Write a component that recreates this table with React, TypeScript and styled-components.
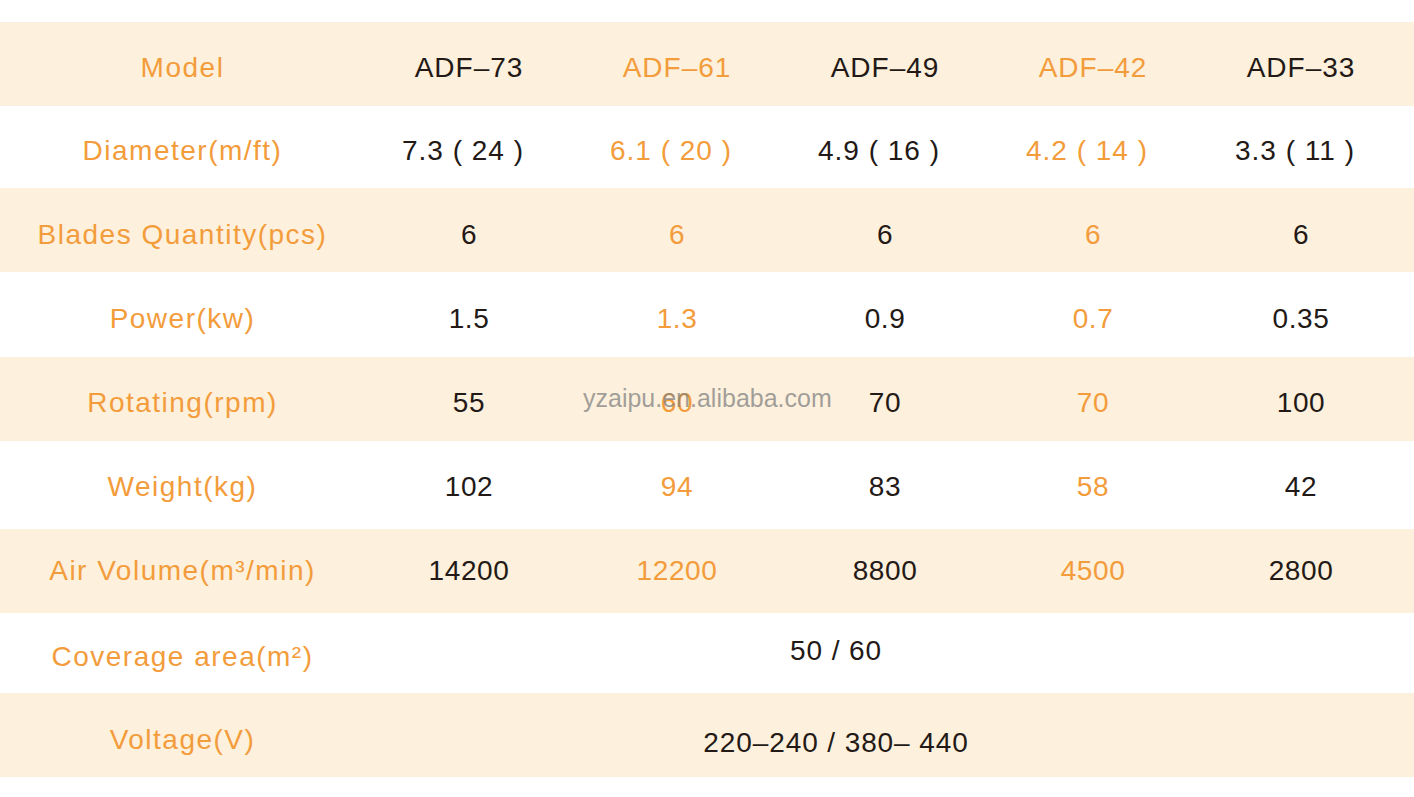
import React from "react";
import styled, { createGlobalStyle } from "styled-components";

const GlobalStyle = createGlobalStyle`
  html, body { margin: 0; padding: 0; background: #ffffff; }
  body { font-family: "Liberation Sans", Arial, "Noto Sans CJK SC", sans-serif; }
`;

const ORANGE = "#f39c3b";
const DARK = "#231916";
const BEIGE = "#fdf0dc";

const Page = styled.div`
  position: relative;
  width: 1414px;
  padding-top: 22px;
`;

const Row = styled.div<{ $h: number; $shaded: boolean; $shift: number }>`
  display: grid;
  grid-template-columns: 365px repeat(5, 208px);
  height: ${(p) => p.$h}px;
  box-sizing: border-box;
  padding-top: ${(p) => Math.max(0, p.$shift * 2)}px;
  padding-bottom: ${(p) => Math.max(0, -p.$shift * 2)}px;
  background: ${(p) => (p.$shaded ? BEIGE : "#ffffff")};
  align-items: center;
`;

const Label = styled.div<{ $lift?: number }>`
  display: flex;
  justify-content: center;
  color: ${ORANGE};
  font-size: 28px;
  letter-spacing: 1.5px;
  white-space: nowrap;
  padding-bottom: ${(p) => Math.max(0, (p.$lift ?? 0) * 2)}px;
  padding-top: ${(p) => Math.max(0, -(p.$lift ?? 0) * 2)}px;
`;

const Value = styled.div<{ $accent: boolean; $wide?: boolean; $padRight?: number }>`
  display: flex;
  justify-content: center;
  color: ${(p) => (p.$accent ? ORANGE : DARK)};
  font-size: 28px;
  letter-spacing: ${(p) => (p.$wide ? 1 : 0.6)}px;
  white-space: pre;
  padding-right: ${(p) => p.$padRight ?? 0}px;
`;

const Merged = styled.div<{ $lift?: number }>`
  grid-column: 2 / -1;
  display: flex;
  justify-content: center;
  padding-right: 98px;
  color: ${DARK};
  font-size: 28px;
  letter-spacing: 0.9px;
  white-space: pre;
  padding-bottom: ${(p) => Math.max(0, (p.$lift ?? 0) * 2)}px;
  padding-top: ${(p) => Math.max(0, -(p.$lift ?? 0) * 2)}px;
`;

const Watermark = styled.div`
  position: absolute;
  left: 583px;
  top: 384px;
  font-size: 25px;
  color: rgba(130, 130, 130, 0.75);
  white-space: nowrap;
  pointer-events: none;
`;

type RowData = {
  label: string;
  values?: string[];
  merged?: string;
  h: number;
  shift: number;
  wide?: boolean;
  padRight?: number;
  labelLift?: number;
  mergedLift?: number;
};

const rows: RowData[] = [
  { label: "Model", values: ["ADF–73", "ADF–61", "ADF–49", "ADF–42", "ADF–33"], h: 84, shift: 4, wide: true },
  {
    label: "Diameter(m/ft)",
    values: ["7.3 ( 24 )", "6.1 ( 20 )", "4.9 ( 16 )", "4.2 ( 14 )", "3.3 ( 11 )"],
    h: 82,
    shift: 4,
    wide: true,
    padRight: 12,
  },
  { label: "Blades Quantity(pcs)", values: ["6", "6", "6", "6", "6"], h: 84, shift: 5 },
  { label: "Power(kw)", values: ["1.5", "1.3", "0.9", "0.7", "0.35"], h: 85, shift: 4 },
  { label: "Rotating(rpm)", values: ["55", "60", "70", "70", "100"], h: 84, shift: 4 },
  { label: "Weight(kg)", values: ["102", "94", "83", "58", "42"], h: 88, shift: 2 },
  { label: "Air Volume(m³/min)", values: ["14200", "12200", "8800", "4500", "2800"], h: 84, shift: 0 },
  { label: "Coverage area(m²)", merged: "50 / 60", h: 80, shift: 1, labelLift: -3, mergedLift: 3 },
  { label: "Voltage(V)", merged: "220–240 / 380– 440", h: 84, shift: 6, labelLift: 1, mergedLift: -2 },
];

export default function App() {
  return (
    <>
      <GlobalStyle />
      <Page>
        {rows.map((r, i) => (
          <Row key={i} $h={r.h} $shaded={i % 2 === 0} $shift={r.shift}>
            <Label $lift={r.labelLift}>{r.label}</Label>
            {r.values
              ? r.values.map((v, j) => (
                  <Value key={j} $accent={j % 2 === 1} $wide={r.wide} $padRight={r.padRight}>
                    {v}
                  </Value>
                ))
              : <Merged $lift={r.mergedLift}>{r.merged}</Merged>}
          </Row>
        ))}
        <Watermark>yzaipu.en.alibaba.com</Watermark>
      </Page>
    </>
  );
}
